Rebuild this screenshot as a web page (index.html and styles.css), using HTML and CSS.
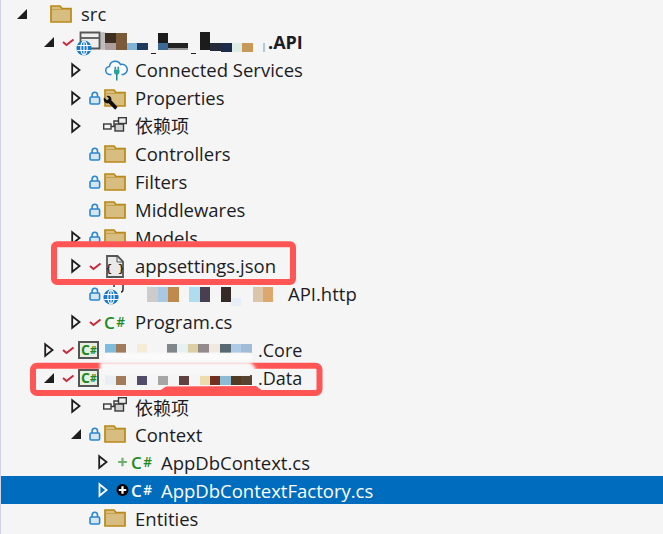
FILE: index.html
```html
<!DOCTYPE html>
<html lang="zh">
<head>
<meta charset="utf-8">
<title>Solution Explorer</title>
<link rel="stylesheet" href="styles.css">
</head>
<body>
<svg class="sprites" width="0" height="0" aria-hidden="true">
  <defs>
    <symbol id="open" viewBox="0 0 10 14"><path d="M1.2 1.2 8.6 7 1.2 12.8Z" fill="none" stroke="#1e1e1e" stroke-width="1.8"/></symbol>
    <symbol id="filled" viewBox="0 0 10 14"><path d="M10 2V12H0Z" fill="#1e1e1e"/></symbol>
    <symbol id="check" viewBox="0 0 13 14"><path d="M1 7 4.5 10 11.5 4.5" fill="none" stroke="#c8283c" stroke-width="2"/></symbol>
    <symbol id="lock" viewBox="0 0 13 14"><rect x="1" y="6" width="9.6" height="7" rx="1.2" fill="#d3e6f5" stroke="#2a86d0" stroke-width="1.6"/><path d="M3.1 6V4a2.7 2.7 0 0 1 5.4 0V6" fill="none" stroke="#2a86d0" stroke-width="1.6"/></symbol>
    <symbol id="folder" viewBox="0 0 22 18"><path d="M1 17V1H10L12 3.5H21V17Z" fill="#d8bd80" stroke="#b98818" stroke-width="1.7"/><path d="M1.5 4.5H20.5" stroke="#c9a04a" stroke-width="1"/></symbol>
    <symbol id="deps" viewBox="0 0 24 15"><g stroke="#3a3a3a" stroke-width="1.4"><rect x="0.7" y="7" width="7.3" height="5" fill="#f5f5f5"/><rect x="12" y="7" width="8.5" height="7" fill="#d0d0d0"/><rect x="15.5" y="0.7" width="7.8" height="5.8" fill="#eeeeee"/><path d="M8 9.5H12M11 9.5V4H15.5" fill="none"/></g></symbol>
    <symbol id="cloud" viewBox="0 0 24 22"><path d="M6.5 14.5H5A4 4 0 0 1 4.5 6.5 5.8 5.8 0 0 1 15.5 4.5 5 5 0 0 1 18.5 14.5H16.5" fill="#fafcff" stroke="#2a86d0" stroke-width="1.5"/><path d="M9 9.5H14.5V12A2.75 2.75 0 0 1 9 12Z" fill="#2aa39c"/><path d="M10.3 9.5V6.8M13.2 9.5V6.8M11.75 14V20.5" fill="none" stroke="#1f8f8a" stroke-width="1.5"/></symbol>
    <symbol id="wrench" viewBox="0 0 15 16"><path d="M1 2.5 4 5.2 6 3.5 3.5 1C6.5-.2 9 2 8.3 5.2L14.5 12 12.2 14.8 5.7 8.3C2.5 9.2-.3 6 1 2.5Z" fill="#111"/></symbol>
    <symbol id="globe" viewBox="0 0 16 16"><circle cx="8" cy="8" r="7.6" fill="#1a78c8"/><g fill="none" stroke="#fff" stroke-width="1.1"><ellipse cx="8" cy="8" rx="3.2" ry="7"/><path d="M8 1V15M1.2 5.5H14.8M1.2 10.5H14.8"/></g></symbol>
    <symbol id="plus" viewBox="0 0 12 12"><path d="M6 2V10M2 6H10" stroke="#6fb06f" stroke-width="2"/></symbol>
    <symbol id="plus-sel" viewBox="0 0 14 14"><circle cx="7" cy="7" r="6.4" fill="#000"/><path d="M7 3V11M3 7H11" stroke="#fff" stroke-width="2.4"/></symbol>
    <symbol id="window" viewBox="0 0 22 20"><path d="M1.5 1.5H20.5V17.5H1.5Z" fill="#eee" stroke="#555" stroke-width="1.8"/><path d="M1.5 7H20.5" stroke="#555" stroke-width="1.8"/></symbol>
  </defs>
</svg>

<main class="tree">
  <div class="row d0">
    <svg class="exp"><use href="#filled"/></svg><span></span>
    <svg class="ico folder-lg"><use href="#folder"/></svg>
    <span class="label">src</span>
  </div>

  <div class="row d1">
    <svg class="exp"><use href="#filled"/></svg>
    <svg class="st"><use href="#check"/></svg>
    <span class="ico-stack">
      <svg class="win"><use href="#window"/></svg>
      <svg class="globe-over"><use href="#globe"/></svg>
    </span>
    <span class="label bold">
      <svg class="mosaic mosaic-api" viewBox="0 0 173 28">
        <circle cx="8" cy="13" r="9" fill="#bdbdbd"/>
        <rect x="10" y="5" width="11" height="10" fill="#3e3020"/>
        <rect x="21" y="5" width="11" height="17" fill="#7a5a38"/>
        <rect x="10" y="15" width="11" height="7" fill="#b09c9c"/>
        <rect x="32" y="15" width="10" height="7" fill="#7fb4d8"/>
        <rect x="42" y="15" width="11" height="7" fill="#1e3a5c"/>
        <rect x="56" y="25" width="5" height="1" fill="#222"/>
        <rect x="63" y="5" width="10" height="10" fill="#1c1c1c"/>
        <rect x="63" y="15" width="10" height="7" fill="#3d6a94"/>
        <rect x="73" y="15" width="20" height="5" fill="#222"/>
        <rect x="73" y="20" width="20" height="2" fill="#999"/>
        <rect x="96" y="25" width="5" height="1" fill="#222"/>
        <rect x="105" y="4" width="10" height="18" fill="#1c1c1c"/>
        <rect x="115" y="15" width="11" height="8" fill="#262a38"/>
        <rect x="126" y="15" width="11" height="9" fill="#1e2c4c"/>
        <rect x="137" y="15" width="10" height="9" fill="#e0ece6"/>
        <rect x="147" y="15" width="11" height="9" fill="#c89858"/>
        <rect x="168" y="15" width="2" height="9" fill="#a8cce4"/>
      </svg>.API
    </span>
  </div>

  <div class="row d2">
    <svg class="exp"><use href="#open"/></svg><span></span>
    <svg class="ico cloud"><use href="#cloud"/></svg>
    <span class="label">Connected Services</span>
  </div>

  <div class="row d2">
    <svg class="exp"><use href="#open"/></svg>
    <svg class="st"><use href="#lock"/></svg>
    <span class="ico-stack">
      <svg class="ico"><use href="#folder"/></svg>
      <svg class="wrench"><use href="#wrench"/></svg>
    </span>
    <span class="label">Properties</span>
  </div>

  <div class="row d2">
    <svg class="exp"><use href="#open"/></svg><span></span>
    <svg class="ico deps"><use href="#deps"/></svg>
    <span class="label cjk">依赖项</span>
  </div>

  <div class="row d2">
    <span></span><svg class="st"><use href="#lock"/></svg>
    <svg class="ico"><use href="#folder"/></svg>
    <span class="label">Controllers</span>
  </div>

  <div class="row d2">
    <span></span><svg class="st"><use href="#lock"/></svg>
    <svg class="ico"><use href="#folder"/></svg>
    <span class="label">Filters</span>
  </div>

  <div class="row d2">
    <span></span><svg class="st"><use href="#lock"/></svg>
    <svg class="ico"><use href="#folder"/></svg>
    <span class="label">Middlewares</span>
  </div>

  <div class="row d2">
    <svg class="exp"><use href="#open"/></svg>
    <svg class="st"><use href="#lock"/></svg>
    <svg class="ico"><use href="#folder"/></svg>
    <span class="label">Models</span>
  </div>

  <div class="row d2">
    <svg class="exp"><use href="#open"/></svg>
    <svg class="st"><use href="#check"/></svg>
    <svg class="json" viewBox="0 0 18 23">
      <path d="M1 1H11.5L17 6.5V22H1Z" fill="#e9e9e9" stroke="#555" stroke-width="1.8"/>
      <path d="M11 1V7H17" fill="none" stroke="#555" stroke-width="1"/>
      <text class="json-text" x="9" y="17" text-anchor="middle">{ }</text>
    </svg>
    <span class="label">appsettings.json</span>
  </div>

  <div class="row d2">
    <span></span><svg class="st"><use href="#lock"/></svg>
    <span class="ico-stack">
      <svg class="http-stub" viewBox="0 0 16 10"><path d="M3 0V4M12 0V6C12 8 11 9 10 9" fill="none" stroke="#222" stroke-width="1.4"/></svg>
      <svg class="globe-http"><use href="#globe"/></svg>
    </span>
    <span class="label">
      <svg class="mosaic mosaic-http" viewBox="0 0 153 28">
        <rect x="12" y="7" width="11" height="15" fill="#cccccc"/>
        <rect x="23" y="7" width="10" height="15" fill="#a9c8e4"/>
        <rect x="33" y="7" width="11" height="15" fill="#c08a4c"/>
        <rect x="54" y="7" width="11" height="15" fill="#b0dcf0"/>
        <rect x="65" y="7" width="10" height="15" fill="#4a3f50"/>
        <rect x="86" y="7" width="10" height="15" fill="#362a26"/>
        <rect x="96" y="18" width="10" height="8" fill="#e8eef8"/>
        <rect x="118" y="7" width="10" height="15" fill="#dcc6a9"/>
        <rect x="128" y="7" width="10" height="15" fill="#dda86e"/>
      </svg>API.http
    </span>
  </div>

  <div class="row d2">
    <svg class="exp"><use href="#open"/></svg>
    <svg class="st"><use href="#check"/></svg>
    <span class="csharp">C<span class="hash">#</span></span>
    <span class="label">Program.cs</span>
  </div>

  <div class="row d1">
    <svg class="exp"><use href="#open"/></svg>
    <svg class="st"><use href="#check"/></svg>
    <span class="cs-project">C<span class="hash">#</span></span>
    <span class="label project-name">
      <svg class="mosaic mosaic-lib" viewBox="0 0 163 28">
        <rect x="10" y="8" width="11" height="9" fill="#7fbbdc"/>
        <rect x="21" y="8" width="10" height="9" fill="#a27c5a"/>
        <rect x="42" y="8" width="10" height="9" fill="#f5ecd8"/>
        <rect x="72" y="8" width="10" height="9" fill="#80868c"/>
        <rect x="82" y="8" width="11" height="9" fill="#e6f2f2"/>
        <rect x="93" y="8" width="10" height="9" fill="#dccfa5"/>
        <rect x="103" y="8" width="11" height="9" fill="#948a8a"/>
        <rect x="114" y="8" width="11" height="9" fill="#efe9e2"/>
        <rect x="125" y="8" width="11" height="9" fill="#566870"/>
        <rect x="136" y="8" width="10" height="9" fill="#aecae4"/>
        <rect x="146" y="8" width="11" height="9" fill="#a2bcd8"/>
      </svg>.Core
    </span>
  </div>

  <div class="row d1">
    <svg class="exp"><use href="#filled"/></svg>
    <svg class="st"><use href="#check"/></svg>
    <span class="cs-project">C<span class="hash">#</span></span>
    <span class="label project-name">
      <svg class="mosaic mosaic-lib" viewBox="0 0 163 28">
        <rect x="10" y="11" width="11" height="10" fill="#e8eef4"/>
        <rect x="21" y="11" width="10" height="10" fill="#a27c5a"/>
        <rect x="42" y="11" width="10" height="10" fill="#534c68"/>
        <rect x="63" y="11" width="10" height="10" fill="#a6a6a6"/>
        <rect x="84" y="11" width="10" height="10" fill="#604040"/>
        <rect x="105" y="11" width="10" height="10" fill="#ecdcb0"/>
        <rect x="115" y="11" width="10" height="10" fill="#733020"/>
        <rect x="125" y="11" width="11" height="10" fill="#8cbcd4"/>
        <rect x="136" y="11" width="10" height="10" fill="#503c24"/>
        <rect x="146" y="11" width="11" height="10" fill="#544430"/>
      </svg>.Data
    </span>
  </div>

  <div class="row d2">
    <svg class="exp"><use href="#open"/></svg><span></span>
    <svg class="ico deps"><use href="#deps"/></svg>
    <span class="label cjk">依赖项</span>
  </div>

  <div class="row d2">
    <svg class="exp"><use href="#filled"/></svg>
    <svg class="st"><use href="#lock"/></svg>
    <svg class="ico"><use href="#folder"/></svg>
    <span class="label">Context</span>
  </div>

  <div class="row d3">
    <svg class="exp"><use href="#open"/></svg>
    <svg class="st"><use href="#plus"/></svg>
    <span class="csharp">C<span class="hash">#</span></span>
    <span class="label">AppDbContext.cs</span>
  </div>

  <div class="row d3 selected">
    <svg class="exp"><path d="M1.5 8.2 8.6 14 1.5 19.8Z" fill="none" stroke="#fff" stroke-width="1.8"/></svg>
    <svg class="st"><use href="#plus-sel"/></svg>
    <span class="csharp">C<span class="hash">#</span></span>
    <span class="label">AppDbContextFactory.cs</span>
  </div>

  <div class="row d2">
    <span></span><svg class="st"><use href="#lock"/></svg>
    <svg class="ico"><use href="#folder"/></svg>
    <span class="label">Entities</span>
  </div>
</main>

<svg class="marks" viewBox="0 0 663 534" aria-hidden="true">
  <defs><filter id="soft"><feGaussianBlur stdDeviation="1.4"/></filter></defs>
  <path d="M105 353H250Q256 358 248 362L105 360Z" fill="#fbfbfb" filter="url(#soft)"/>
  <rect x="54" y="244.2" width="239" height="37.8" rx="3" class="mark"/>
  <rect x="33" y="365.7" width="286.5" height="27.3" rx="4" class="mark"/>
  <path d="M160 390.5 166 386.5 256 386 262 390.5Z" fill="#ff5555"/>
  <path d="M100 362H250L256 368 250 374H100Z" fill="#f8f8f8" filter="url(#soft)"/>
  <path d="M108 374H250V376H108Z" fill="#f5f5f5"/>
</svg>
</body>
</html>
```

FILE: styles.css
```css
* { box-sizing: border-box; }

html, body {
  margin: 0;
  height: 100%;
  overflow: hidden;
  background: #f5f5f5;
}

body {
  position: relative;
  font-family: "Open Sans", "Noto Sans CJK SC", sans-serif;
  font-size: 18.5px;
  color: #1c1c24;
}

.sprites { position: absolute; }

.tree {
  border-left: 1px solid #cfd3e6;
  height: 534px;
}

.row {
  display: grid;
  grid-template-columns: 18px 15px 31px max-content;
  align-items: center;
  height: 28px;
  white-space: nowrap;
}

.d0 { padding-left: 16px; }
.d1 { padding-left: 43px; }
.d2 { padding-left: 70px; }
.d3 { padding-left: 97px; }

.selected {
  background: #006cbe;
  color: #fff;
}

.exp { width: 10px; height: 28px; }
.st { width: 13px; height: 14px; }

.ico { width: 22px; height: 18px; display: block; }
.folder-lg { margin-top: -1px; }
.cloud { width: 24px; height: 22px; margin-left: 1px; margin-top: 2px; }
.deps { width: 24px; height: 15px; margin-left: -1px; margin-top: -3px; }

.ico-stack {
  position: relative;
  display: block;
  width: 22px;
  height: 28px;
}
.ico-stack .ico { margin-top: 5px; }

.win { position: absolute; left: 2px; top: 3px; width: 22px; height: 20px; }
.globe-over { position: absolute; left: -1px; top: 12px; width: 16px; height: 16px; }
.wrench { position: absolute; left: -1px; top: 11px; width: 15px; height: 16px; }
.http-stub { position: absolute; left: 7px; top: 3px; width: 16px; height: 10px; }
.globe-http { position: absolute; left: -1px; top: 9px; width: 16px; height: 16px; }

.json {
  display: block;
  width: 18px;
  height: 23px;
  margin-left: 2px;
}

.json-text {
  font: 700 10px "Liberation Mono", monospace;
  fill: #222;
}

.csharp {
  font-weight: 600;
  font-size: 17px;
  line-height: 1;
  color: #1e8a22;
  letter-spacing: 1.5px;
}

.selected .csharp { color: #fff; }

.hash {
  font-size: 13.5px;
  vertical-align: 2px;
}

.cs-project {
  display: block;
  width: 21px;
  height: 18px;
  margin-left: 1px;
  padding-left: 1px;
  overflow: hidden;
  background: #e6efe2;
  border: 2px solid #555;
  font-weight: 700;
  font-size: 14px;
  line-height: 14px;
  color: #1e8a22;
}

.cs-project .hash { font-size: 10.5px; vertical-align: 1px; }

.label {
  display: flex;
  align-items: center;
  height: 28px;
}

.row:nth-child(-n+14) .label { padding-bottom: 2px; }
.row:nth-child(n+15) .label { padding-top: 1px; }

.d3 .label { margin-left: -1px; }
.cjk { font-size: 18px; }
.bold { font-weight: 700; font-size: 18px; }
.project-name { font-size: 18px; }
.row:nth-child(n) .bold,
.row:nth-child(n) .project-name { padding-bottom: 0; }

.mosaic { height: 28px; flex: none; overflow: visible; align-self: flex-start; }
.mosaic-api { width: 173px; margin-left: -13px; }
.mosaic-lib { width: 163px; margin-left: -13px; }
.mosaic-http { width: 153px; }

.marks {
  position: absolute;
  left: 0;
  top: 0;
  width: 663px;
  height: 534px;
  pointer-events: none;
}

.mark {
  fill: none;
  stroke: #ff5555;
  stroke-width: 6;
}
```
